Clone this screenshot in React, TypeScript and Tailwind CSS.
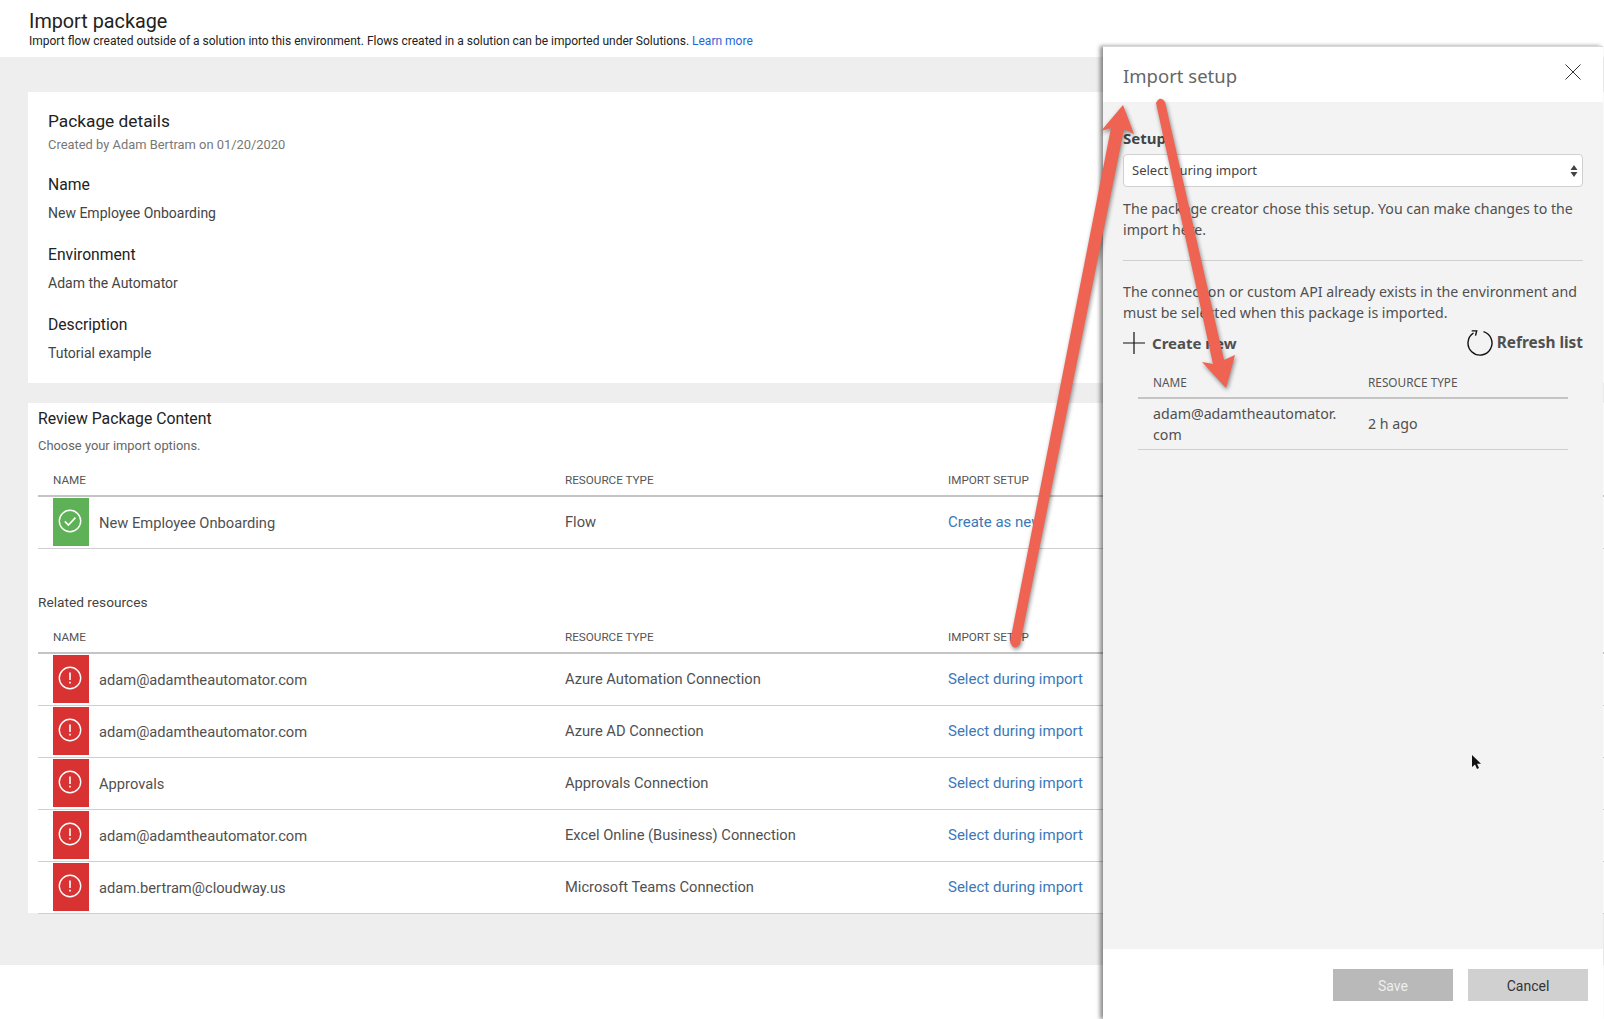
const roboto = "font-['Roboto',sans-serif]";
const noto = "font-['Noto_Sans',sans-serif]";

const rows = [
  { name: "adam@adamtheautomator.com", type: "Azure Automation Connection" },
  { name: "adam@adamtheautomator.com", type: "Azure AD Connection" },
  { name: "Approvals", type: "Approvals Connection" },
  { name: "adam@adamtheautomator.com", type: "Excel Online (Business) Connection" },
  { name: "adam.bertram@cloudway.us", type: "Microsoft Teams Connection" },
];

const TableHead = () => (
  <div className="grid grid-cols-[527px_383px_1fr] h-[24px] border-b-2 border-[#c4c4c4] text-[11.700px] leading-[15px] text-[#555]">
    <div className="pl-[15px]">NAME</div>
    <div>RESOURCE TYPE</div>
    <div>IMPORT SETUP</div>
  </div>
);

const StatusIcon = ({ ok }: { ok: boolean }) => (
  <div className={`w-[36px] h-[48px] flex items-center justify-center pb-[2px] pr-[2px] ${ok ? "bg-[#5fb158]" : "bg-[#d83232]"}`}>
    <svg width="24" height="24" viewBox="0 0 24 24" fill="none" stroke="#fff" strokeWidth="1.400">
      <circle cx="12" cy="12" r="10.700" />
      {ok ? (
        <path d="M6.800 12.400l3.600 3.600 7-7.400" strokeWidth="1.600" />
      ) : (
        <>
          <path d="M12 6.500v7.500" strokeWidth="1.600" />
          <path d="M12 15.800v1.800" strokeWidth="1.600" />
        </>
      )}
    </svg>
  </div>
);

const Row = ({ name, type, action, ok }: { name: string; type: string; action: string; ok: boolean }) => (
  <div className="grid grid-cols-[527px_383px_1fr] h-[52px] border-b border-[#cfcfcf]">
    <div className="flex pl-[15px] pt-[1px]">
      <StatusIcon ok={ok} />
      <span className="ml-[10px] mt-[15px] text-[14.700px] leading-[20px] text-[#505050]">{name}</span>
    </div>
    <div className="pt-[15px] text-[14.700px] leading-[20px] text-[#505050]">{type}</div>
    <div className="pt-[15px] text-[15px] leading-[20px] text-[#3b78b8]">{action}</div>
  </div>
);

const Detail = ({ label, value }: { label: string; value: string }) => (
  <>
    <div className="mt-[22px] text-[15.700px] leading-[20px] text-[#222]">{label}</div>
    <div className="mt-[8px] text-[14px] leading-[20px] text-[#444]">{value}</div>
  </>
);

export default function App() {
  return (
    <div className={`relative w-[1604px] h-[1019px] overflow-hidden bg-white ${roboto}`}>
      {/* Page header */}
      <div className="h-[57px] pl-[29px] pt-[11px]">
        <div className="text-[19.800px] leading-[22px] text-[#222]">Import package</div>
        <div className="text-[12px] leading-[16px] text-[#222]">
          Import flow created outside of a solution into this environment. Flows created in a solution can be imported under Solutions.{" "}
          <span className="text-[#1f66d8]">Learn more</span>
        </div>
      </div>

      {/* Page body */}
      <div className="h-[908px] bg-[#eeeeee] pl-[28px] pt-[35px]">
        <div className="h-[291px] bg-white pl-[20px] pt-[19px]">
          <div className="text-[17.300px] leading-[20px] text-[#222]">Package details</div>
          <div className="mt-[6px] text-[12.900px] leading-[16px] text-[#777]">Created by Adam Bertram on 01/20/2020</div>
          <Detail label="Name" value="New Employee Onboarding" />
          <Detail label="Environment" value="Adam the Automator" />
          <Detail label="Description" value="Tutorial example" />
        </div>

        <div className="mt-[20px] h-[510px] bg-white pl-[10px] pt-[6px]">
          <div className="text-[15.800px] leading-[20px] text-[#222]">Review Package Content</div>
          <div className="mt-[9px] text-[12.900px] leading-[16px] text-[#666]">Choose your import options.</div>
          <div className="mt-[19px]">
            <TableHead />
            <Row ok name="New Employee Onboarding" type="Flow" action="Create as new" />
          </div>
          <div className="mt-[43px] text-[13.700px] leading-[20px] text-[#444]">Related resources</div>
          <div className="mt-[18px]">
            <TableHead />
            {rows.map((r, i) => (
              <Row key={i} ok={false} name={r.name} type={r.type} action="Select during import" />
            ))}
          </div>
        </div>
      </div>

      {/* Import setup panel */}
      <div className={`absolute left-[1103px] top-[46px] bottom-0 w-[500px] flex flex-col bg-white border-t border-[#d8d8d8] shadow-[-3px_0_4px_rgba(0,0,0,0.45)] ${noto}`}>
        <div className="h-[55px] shrink-0 flex justify-between pl-[20px] pr-[22px] pt-[15px]">
          <span className="text-[18.500px] leading-[27px] text-[#666]">Import setup</span>
          <svg width="16" height="16" viewBox="0 0 16 16" stroke="#333" strokeWidth="1" className="mt-[2px]">
            <path d="M0.500 0.500l15 15M15.500 0.500l-15 15" />
          </svg>
        </div>

        <div className="flex-1 bg-[#f3f3f3] px-[20px] pt-[26px]">
          <div className="text-[15px] leading-[20px] font-bold text-[#444]">Setup</div>
          <div className="mt-[6px] h-[33px] flex items-center justify-between rounded-[4px] border border-[#d0d0d0] bg-white pl-[8px] pr-[3px] text-[13px] text-[#444]">
            <span className="pt-[1px]">Select during import</span>
            <svg width="10" height="14" viewBox="0 0 10 14" fill="#444">
              <path d="M5 1l3.500 5h-7zM5 13L1.500 8h7z" />
            </svg>
          </div>
          <p className="mt-[11px] text-[14.200px] leading-[21px] text-[#505050]">
            The package creator chose this setup. You can make changes to the import here.
          </p>
          <div className="mt-[20px] border-t border-[#cfcfcf]" />
          <p className="mt-[20px] text-[14.200px] leading-[21px] text-[#505050]">
            The connection or custom API already exists in the environment and must be selected when this package is imported.
          </p>
          <div className="mt-[8px] h-[24px] flex items-center justify-between text-[15px] font-bold text-[#505050]">
            <div className="flex items-center">
              <svg width="22" height="22" viewBox="0 0 22 22" stroke="#111" strokeWidth="1.200">
                <path d="M0 11h22M11 0v22" />
              </svg>
              <span className="ml-[7px]">Create new</span>
            </div>
            <div className="flex items-center">
              <svg width="26" height="26" viewBox="0 0 26 26" fill="none" stroke="#111" strokeWidth="1.400">
                <path d="M16.500 1.600A12 12 0 1 1 6.500 3" />
                <path d="M4.700 0.900H9.700L8.500 5.700" />
              </svg>
              <span className="ml-[4px] text-[15.400px]">Refresh list</span>
            </div>
          </div>
          <div className="mx-[15px] mt-[19px]">
            <div className="grid grid-cols-[230px_1fr] border-b-2 border-[#c4c4c4] pb-[7px] text-[11.800px] leading-[16px] text-[#555]">
              <div className="pl-[15px]">NAME</div>
              <div>RESOURCE TYPE</div>
            </div>
            <div className="grid grid-cols-[230px_1fr] items-center border-b border-[#cfcfcf] pt-[4px] pb-[4px] text-[14.200px] leading-[21px] text-[#505050]">
              <div className="pl-[15px] pr-[10px]">
                adam@adamtheautomator.<wbr />com
              </div>
              <div className="pb-[2px]">2 h ago</div>
            </div>
          </div>
        </div>

        <div className={`h-[70px] shrink-0 flex justify-end gap-[15px] pt-[20px] pr-[15px] text-[14px] ${roboto}`}>
          <div className="w-[120px] h-[32px] flex items-center justify-center pt-[2px] bg-[#b9b9b9] text-[#eeeeee]">Save</div>
          <div className="w-[120px] h-[32px] flex items-center justify-center pt-[2px] bg-[#d0d0d0] text-[#333]">Cancel</div>
        </div>
      </div>

      {/* Annotation arrows and pointer */}
      <svg
        className="absolute inset-0 pointer-events-none drop-shadow-[1px_2px_2px_rgba(0,0,0,0.45)]"
        width="1604"
        height="1019"
        viewBox="0 0 1604 1019"
        fill="#ee6352"
      >
        <path d="M1010 642L1111 128L1101 131L1123 105L1134 134L1124 129L1020 644Q1014 652 1010 642Z" />
        <path d="M1156 103Q1160 95 1165 102L1224 360L1235 355L1226 388L1202 362L1213 364Z" />
      </svg>
      <svg className="absolute left-[1471px] top-[754px]" width="11" height="17" viewBox="0 0 11 17" fill="#111">
        <path d="M1 1v12l3-2.500 2 4.500 2-1-2-4.300h4z" />
      </svg>
    </div>
  );
}
